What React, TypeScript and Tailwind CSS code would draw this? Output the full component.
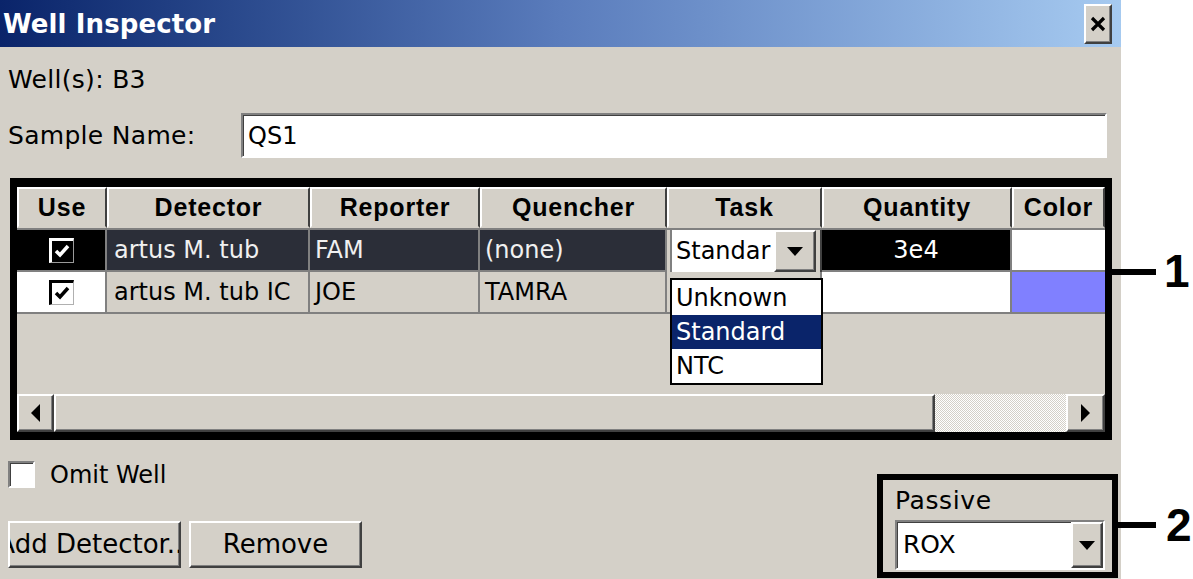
import React from "react";

const raised =
  "border-2 border-t-white border-l-white border-r-[#404040] border-b-[#404040] shadow-[inset_-1px_-1px_0_#808080]";
const sunken =
  "border-2 border-t-[#808080] border-l-[#808080] border-r-white border-b-white shadow-[inset_1px_1px_0_#404040]";

function Tri({ dir }: { dir: "down" | "left" | "right" }) {
  if (dir === "down")
    return (
      <svg width="16" height="9" viewBox="0 0 16 9">
        <path d="M0 0 H16 L8 9 Z" fill="#000" />
      </svg>
    );
  if (dir === "left")
    return (
      <svg width="9" height="18" viewBox="0 0 9 18">
        <path d="M9 0 V18 L0 9 Z" fill="#000" />
      </svg>
    );
  return (
    <svg width="9" height="18" viewBox="0 0 9 18">
      <path d="M0 0 V18 L9 9 Z" fill="#000" />
    </svg>
  );
}

function CheckBox({ inverted }: { inverted?: boolean }) {
  return inverted ? (
    <div className="w-[25px] h-[25px] bg-black border-t-[3px] border-l-[3px] border-white border-r border-b border-r-[#9a9a9a] border-b-[#9a9a9a] flex items-center justify-center">
      <svg width="16" height="14" viewBox="0 0 16 14">
        <path d="M2 7 L6 11 L14 2" stroke="#fff" strokeWidth="3.5" fill="none" />
      </svg>
    </div>
  ) : (
    <div className="w-[25px] h-[25px] bg-white border-t-[3px] border-l-[3px] border-black border-r border-b border-r-[#b0b0b0] border-b-[#b0b0b0] flex items-center justify-center">
      <svg width="16" height="14" viewBox="0 0 16 14">
        <path d="M2 7 L6 11 L14 2" stroke="#000" strokeWidth="3.5" fill="none" />
      </svg>
    </div>
  );
}

const cols = [
  { name: "Use", w: "w-[90px]" },
  { name: "Detector", w: "w-[203px]" },
  { name: "Reporter", w: "w-[170px]" },
  { name: "Quencher", w: "w-[187px]" },
  { name: "Task", w: "w-[155px]" },
  { name: "Quantity", w: "w-[190px]" },
  { name: "Color", w: "w-[93px]" },
];

export default function App() {
  return (
    <div className="relative w-[1193px] h-[579px] bg-white flex overflow-hidden font-['DejaVu_Sans',sans-serif] text-black">
      {/* dialog */}
      <div className="w-[1121px] h-full bg-[#d4d0c8] flex flex-col">
        <div className="h-[47px] shrink-0 bg-linear-to-r from-[#0a246a] via-[#5a7cbc] to-[#a6caf0] flex items-center justify-between pl-[3px] pr-[9px]">
          <span className="text-white font-bold text-[26px] leading-none tracking-[0.1px]">
            Well Inspector
          </span>
          <div className={`w-[28px] h-[40px] bg-[#d4d0c8] flex items-center justify-center ${raised}`}>
            <svg width="16" height="16" viewBox="0 0 16 16">
              <path d="M2 2 L14 14 M14 2 L2 14" stroke="#000" strokeWidth="3.2" />
            </svg>
          </div>
        </div>

        <div className="mt-[18px] h-[30px] leading-[30px] pl-[8px] text-[25px] tracking-[0.3px]">Well(s): B3</div>

        <div className="mt-[18px] flex items-center h-[45px]">
          <div className="w-[241px] pl-[8px] text-[25px] tracking-[0.3px]">Sample Name:</div>
          <div className={`w-[866px] h-full bg-white flex items-center pl-[5px] text-[24px] ${sunken}`}>
            QS1
          </div>
        </div>

        {/* detector table */}
        <div className="mt-[20px] ml-[10px] w-[1102px] border-[7px] border-t-[9px] border-b-[8px] border-black bg-[#d4d0c8]">
          <div className="relative flex flex-col">
            <div className="flex h-[43px] border-b-2 border-[#808080]">
              {cols.map((c) => (
                <div
                  key={c.name}
                  className={`${c.w} h-full flex items-center justify-center font-['Liberation_Sans',Arial,sans-serif] font-bold text-[25px] tracking-[0.8px] border-2 border-t-white border-l-white border-r-[#404040] border-b-[#d4d0c8]`}
                >
                  {c.name}
                </div>
              ))}
            </div>

            {/* row 1 */}
            <div className="flex h-[42px] text-[24px]">
              <div className="w-[90px] bg-black border-r-2 border-b-2 border-[#808080] flex items-center justify-center">
                <CheckBox inverted />
              </div>
              <div className="w-[203px] bg-[#2b2e38] text-[#f0f0f0] border-r-2 border-b-2 border-[#808080] flex items-center pl-[7px]">
                artus M. tub
              </div>
              <div className="w-[170px] bg-[#2b2e38] text-[#f0f0f0] border-r-2 border-b-2 border-[#808080] flex items-center pl-[5px]">
                FAM
              </div>
              <div className="w-[187px] bg-[#2b2e38] text-[#f0f0f0] border-r-2 border-b-2 border-[#808080] flex items-center pl-[5px]">
                (none)
              </div>
              <div className="w-[155px] bg-[#d4d0c8] flex items-stretch pl-[3px] pr-[4px] border-r-2 border-[#404040]">
                <div className="flex-1 flex bg-white border-l-2 border-[#808080] overflow-hidden">
                  <div className="w-[102px] flex items-center pl-[4px] overflow-hidden whitespace-nowrap">Standar</div>
                  <div className={`flex-1 bg-[#d4d0c8] flex items-center justify-center ${raised}`}>
                    <Tri dir="down" />
                  </div>
                </div>
              </div>
              <div className="w-[190px] bg-black text-white border-r-2 border-b-2 border-[#808080] flex items-center justify-center">
                3e4
              </div>
              <div className="w-[93px] bg-white border-b-2 border-[#808080]" />
            </div>

            {/* row 2 */}
            <div className="flex h-[42px] text-[24px]">
              <div className="w-[90px] bg-white border-r-2 border-b-2 border-[#808080] flex items-center justify-center">
                <CheckBox />
              </div>
              <div className="w-[203px] border-r-2 border-b-2 border-[#808080] flex items-center pl-[7px] whitespace-nowrap">
                artus M. tub IC
              </div>
              <div className="w-[170px] border-r-2 border-b-2 border-[#808080] flex items-center pl-[5px]">
                JOE
              </div>
              <div className="w-[187px] border-r-2 border-b-2 border-[#808080] flex items-center pl-[5px]">
                TAMRA
              </div>
              <div className="w-[155px] border-r-2 border-b-2 border-[#808080]" />
              <div className="w-[190px] bg-white border-r-2 border-b-2 border-[#808080]" />
              <div className="w-[93px] bg-[#8080ff] border-b-2 border-[#808080]" />
            </div>

            <div className="h-[80px]" />

            {/* horizontal scrollbar */}
            <div className="flex h-[38px]">
              <div className={`w-[37px] bg-[#d4d0c8] flex items-center justify-center ${raised}`}>
                <Tri dir="left" />
              </div>
              <div className={`w-[881px] bg-[#d4d0c8] ${raised}`} />
              <div className="w-[131px] bg-[repeating-conic-gradient(#d4d0c8_0%_25%,#ffffff_0%_50%)] bg-[length:2px_2px]" />
              <div className={`w-[39px] bg-[#d4d0c8] flex items-center justify-center ${raised}`}>
                <Tri dir="right" />
              </div>
            </div>

            {/* open task dropdown */}
            <div className="absolute left-[653px] top-[91px] w-[153px] h-[107px] bg-white border-2 border-black flex flex-col text-[24px]">
              <div className="h-[35px] flex items-center pl-[4px]">Unknown</div>
              <div className="h-[34px] flex items-center pl-[4px] bg-[#0a246a] text-white">Standard</div>
              <div className="h-[34px] flex items-center pl-[4px]">NTC</div>
            </div>
          </div>
        </div>

        {/* bottom area */}
        <div className="flex flex-1">
          <div className="flex flex-col pl-[8px]">
            <div className="mt-[21px] flex items-center h-[27px]">
              <div className={`w-[27px] h-[27px] bg-white ${sunken}`} />
              <span className="ml-[15px] text-[24px]">Omit Well</span>
            </div>
            <div className="mt-[33px] flex gap-[8px]">
              <div className={`w-[173px] h-[47px] bg-[#d4d0c8] flex items-center justify-center overflow-hidden whitespace-nowrap text-[26px] ${raised}`}>
                Add Detector...
              </div>
              <div className={`w-[173px] h-[47px] bg-[#d4d0c8] flex items-center justify-center text-[26px] ${raised}`}>
                Remove
              </div>
            </div>
          </div>

          <div className="ml-auto mr-[3px] mt-[34px] w-[241px] h-[104px] border-[6px] border-black overflow-hidden flex flex-col pl-[12px] pr-[7px]">
            <div className="mt-[6px] h-[30px] leading-[30px] text-[25px] tracking-[0.6px]">Passive</div>
            <div className={`mt-[4px] h-[50px] bg-white flex ${sunken}`}>
              <div className="flex-1 flex items-center pl-[6px] text-[25px]">ROX</div>
              <div className={`w-[32px] bg-[#d4d0c8] flex items-center justify-center ${raised}`}>
                <Tri dir="down" />
              </div>
            </div>
          </div>
        </div>
      </div>

      {/* callout labels */}
      <div className="absolute left-[1112px] top-[269px] w-[44px] h-[6px] bg-black" />
      <div className="absolute left-[1164px] top-[248px] font-['Liberation_Sans',Arial,sans-serif] font-bold text-[46px] leading-none">1</div>
      <div className="absolute left-[1118px] top-[522px] w-[38px] h-[6px] bg-black" />
      <div className="absolute left-[1166px] top-[502px] font-['Liberation_Sans',Arial,sans-serif] font-bold text-[46px] leading-none">2</div>
    </div>
  );
}
